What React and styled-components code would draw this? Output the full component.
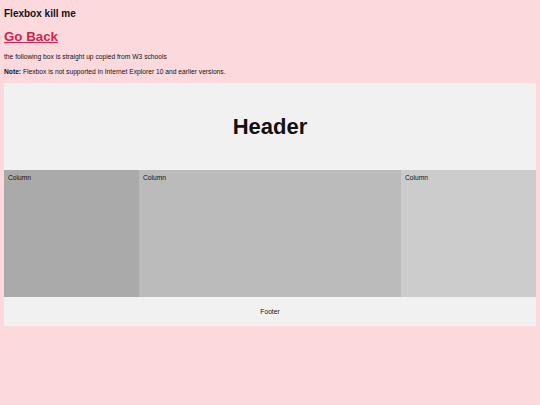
import styled, { createGlobalStyle } from "styled-components";

const GlobalStyle = createGlobalStyle`
  html, body {
    margin: 0;
    padding: 0;
    background: #fcd9dd;
    font-family: "Liberation Sans", Arial, sans-serif;
    color: #111;
  }
`;

const Page = styled.div`
  padding: 0 4px;
`;

const Title = styled.h3`
  margin: 8px 0 0;
  font-size: 10px;
  line-height: 12px;
  font-weight: bold;
`;

const BackLink = styled.a`
  display: block;
  margin-top: 8.5px;
  font-size: 13.3px;
  line-height: 15px;
  font-weight: bold;
  color: #d61f4c;
  text-decoration: underline;
  width: max-content;
`;

const Text = styled.p`
  margin: ${(props) => props.$top}px 0 0;
  font-size: 6.7px;
  line-height: 8px;
`;

const Box = styled.div`
  margin-top: 7.3px;
  display: flex;
  flex-direction: column;
`;

const Header = styled.div`
  height: 87px;
  background: #f1f1f1;
  display: flex;
  align-items: center;
  justify-content: center;

  h1 {
    margin: 2px 0 0;
    font-size: 22px;
    line-height: 24px;
  }
`;

const Row = styled.div`
  display: flex;
  height: 127px;
`;

const Column = styled.div`
  flex: ${(props) => (props.$wide ? "1 1 auto" : "0 0 135px")};
  background: ${(props) => props.$bg};
  padding: 4px;
  box-sizing: border-box;
  font-size: 6.7px;
  line-height: 8px;
`;

const Footer = styled.div`
  height: 29px;
  background: #f1f1f1;
  display: flex;
  align-items: center;
  justify-content: center;
  font-size: 6.7px;
`;

export default function App() {
  return (
    <Page>
      <GlobalStyle />
      <Title>Flexbox kill me</Title>
      <BackLink href="#">Go Back</BackLink>
      <Text $top={9}>the following box is straight up copied from W3 schools</Text>
      <Text $top={7}>
        <b>Note:</b> Flexbox is not supported in Internet Explorer 10 and earlier versions.
      </Text>
      <Box>
        <Header>
          <h1>Header</h1>
        </Header>
        <Row>
          <Column $bg="#aaaaaa">Column</Column>
          <Column $bg="#bbbbbb" $wide>Column</Column>
          <Column $bg="#cccccc">Column</Column>
        </Row>
        <Footer>Footer</Footer>
      </Box>
    </Page>
  );
}
